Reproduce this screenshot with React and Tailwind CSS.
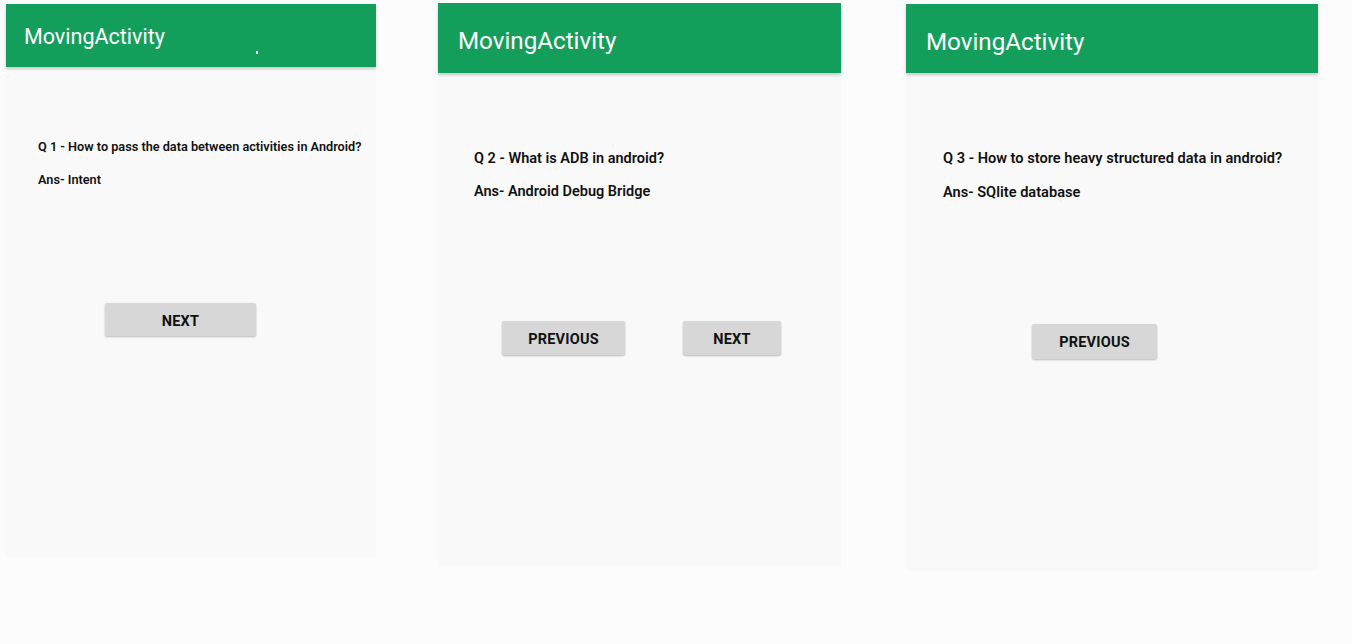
const screens = [
  {
    id: 1,
    outer: "ml-[6px] mt-[4px] w-[370px] h-[553px]",
    header: "h-[63px] pl-[18px] pt-[22px] text-[21.5px]",
    body: "pt-[74px] pl-[32px] text-[12.7px]",
    question: "Q 1 - How to pass the data between activities in Android?",
    answer: "Ans- Intent",
    gap: "mt-[20px]",
    buttons: "mt-[117px] pl-[99px]",
    dot: true,
  },
  {
    id: 2,
    outer: "ml-[62px] mt-[3px] w-[403px] h-[564px]",
    header: "h-[70px] pl-[20px] pt-[26px] text-[24.2px]",
    body: "pt-[79px] pl-[36px] text-[14.5px]",
    question: "Q 2 - What is ADB in android?",
    answer: "Ans- Android Debug Bridge",
    gap: "mt-[18px]",
    buttons: "mt-[122px] pl-[64px]",
  },
  {
    id: 3,
    outer: "ml-[65px] mt-[4px] w-[412px] h-[566px]",
    header: "h-[69px] pl-[20px] pt-[26px] text-[24.2px]",
    body: "pt-[78px] pl-[37px] text-[14.6px]",
    question: "Q 3 - How to store heavy structured data in android?",
    answer: "Ans- SQlite database",
    gap: "mt-[19px]",
    buttons: "mt-[125px] pl-[126px]",
  },
];

function Btn({ label, className }) {
  return (
    <button className={"bg-[#d6d7d6] rounded-[2px] shadow-[0_1px_2px_rgba(0,0,0,0.25)] pt-[3px] text-[14.5px] font-bold text-[#111] tracking-[0.2px] " + className}>
      {label}
    </button>
  );
}

function Screen({ s }) {
  return (
    <div className={"flex flex-col bg-[#f9f9f9] shrink-0 " + s.outer}>
      <div className={"relative bg-[#139f5b] text-white shadow-[0_2px_3px_rgba(0,0,0,0.2)] leading-none " + s.header}>
        MovingActivity
        {s.dot && <span className="absolute left-[250px] top-[47px] w-[2px] h-[3px] bg-white" />}
      </div>
      <div className={"flex flex-col font-semibold text-[#111] leading-none " + s.body}>
        <div>{s.question}</div>
        <div className={s.gap}>{s.answer}</div>
      </div>
      <div className={"flex " + s.buttons}>
        {s.id === 1 && <Btn label="NEXT" className="w-[151px] h-[33px]" />}
        {s.id === 2 && (
          <>
            <Btn label="PREVIOUS" className="w-[123px] h-[34px]" />
            <Btn label="NEXT" className="w-[98px] h-[34px] ml-[58px]" />
          </>
        )}
        {s.id === 3 && <Btn label="PREVIOUS" className="w-[125px] h-[35px]" />}
      </div>
    </div>
  );
}

export default function App() {
  return (
    <div className="w-[1352px] h-[644px] bg-[#fcfcfc] flex items-start overflow-hidden" style={{ fontFamily: "Roboto, 'Noto Sans', sans-serif" }}>
      {screens.map((s) => (
        <Screen key={s.id} s={s} />
      ))}
    </div>
  );
}
